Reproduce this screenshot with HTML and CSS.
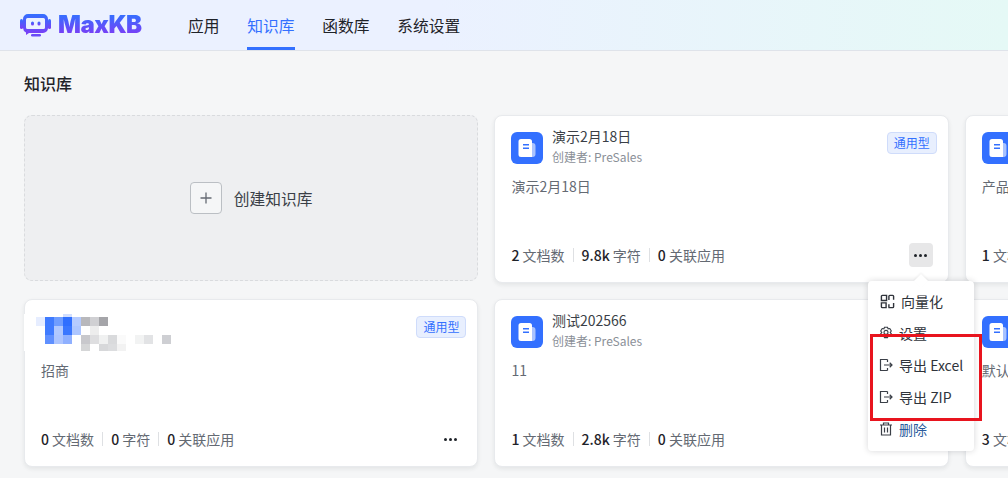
FILE: index.html
```html
<!DOCTYPE html>
<html lang="zh-CN">
<head>
<meta charset="utf-8">
<title>MaxKB 知识库</title>
<link rel="stylesheet" href="styles.css">
</head>
<body>
<header class="topbar">
  <div class="logo">
    <svg class="logo-icon" width="32" height="24" viewBox="0 0 32 24">
      <defs><linearGradient id="lg" x1="0" y1="0" x2="0" y2="1"><stop offset="0" stop-color="#3370ff"/><stop offset="1" stop-color="#7f3bf5"/></linearGradient></defs>
      <rect x="0" y="6" width="3" height="10" rx="1.5" fill="url(#lg)"/>
      <rect x="28" y="6" width="3" height="10" rx="1.5" fill="url(#lg)"/>
      <path fill-rule="evenodd" fill="url(#lg)" d="M8 1h15a5 5 0 0 1 5 5v9a5 5 0 0 1-5 5H9l-3 2v-2.6A5 5 0 0 1 3 15V6a5 5 0 0 1 5-5zm-.5 4A1.5 1.5 0 0 0 6 6.500v8A1.500 1.500 0 0 0 7.500 16h16a1.500 1.500 0 0 0 1.500-1.500v-8A1.500 1.500 0 0 0 23.500 5z"/>
      <rect x="11" y="8.500" width="3" height="4" rx="1.500" fill="url(#lg)"/>
      <rect x="17.500" y="8.500" width="3" height="4" rx="1.500" fill="url(#lg)"/>
      <rect x="11" y="21" width="10" height="2.500" rx="1.200" fill="#6a4cf8"/>
    </svg>
    <span class="logo-text">MaxKB</span>
  </div>
  <nav class="nav">
    <a class="nav-item">应用</a>
    <a class="nav-item active">知识库</a>
    <a class="nav-item">函数库</a>
    <a class="nav-item">系统设置</a>
  </nav>
</header>

<main class="page">
  <h1 class="page-title">知识库</h1>
  <div class="grid">
    <div class="card create">
      <span class="plus"><svg width="14" height="14" viewBox="0 0 14 14"><path d="M7 1.500v11M1.500 7h11" stroke="#646a73" stroke-width="1.300" fill="none"/></svg></span>
      <span class="create-label">创建知识库</span>
    </div>

    <div class="card">
      <div class="card-head">
        <svg class="kb-icon" width="32" height="32" viewBox="0 0 32 32"><use href="#kb"/></svg>
        <div class="titles"><div class="name">演示2月18日</div><div class="owner">创建者: PreSales</div></div>
        <span class="tag">通用型</span>
      </div>
      <p class="desc">演示2月18日</p>
      <div class="card-foot">
        <div class="stats"><span class="stat"><b>2</b> 文档数</span><i class="sep"></i><span class="stat"><b>9.8k</b> 字符</span><i class="sep"></i><span class="stat"><b>0</b> 关联应用</span></div>
        <span class="more hover"><i></i><i></i><i></i></span>
      </div>
    </div>

    <div class="card">
      <div class="card-head">
        <svg class="kb-icon" width="32" height="32" viewBox="0 0 32 32"><use href="#kb"/></svg>
      </div>
      <p class="desc">产品</p>
      <div class="card-foot"><div class="stats"><span class="stat"><b>1</b> 文档数</span></div></div>
    </div>

    <div class="card masked">
      <div class="card-head no-icon">
        <svg class="mosaic" width="147" height="38" viewBox="-3 0 147 38" shape-rendering="crispEdges">
          <rect x="-3" width="12" height="37" fill="#fff"/>
          <rect x="36" width="9" height="3" fill="#d2dfff"/>
          <rect x="9" y="3" width="9" height="9" fill="#e6edff"/><rect x="18" y="3" width="9" height="9" fill="#3f7bff"/><rect x="27" y="3" width="9" height="9" fill="#6f9dff"/><rect x="36" y="3" width="9" height="9" fill="#2f6fff"/><rect x="45" y="3" width="9" height="9" fill="#b5cbff"/><rect x="54" y="3" width="9" height="9" fill="#b8b8bc"/><rect x="63" y="3" width="9" height="9" fill="#d0d0d3"/><rect x="72" y="3" width="9" height="9" fill="#a5a5a9"/>
          <rect x="18" y="12" width="9" height="9" fill="#3f7bff"/><rect x="27" y="12" width="9" height="9" fill="#b0c8ff"/><rect x="36" y="12" width="9" height="9" fill="#3a77ff"/><rect x="45" y="12" width="9" height="9" fill="#adc6ff"/><rect x="63" y="12" width="9" height="9" fill="#ededed"/>
          <rect x="18" y="21" width="9" height="9" fill="#5f90ff"/><rect x="27" y="21" width="9" height="9" fill="#adc5ff"/><rect x="36" y="21" width="9" height="9" fill="#8fb0ff"/><rect x="54" y="21" width="9" height="9" fill="#c8c8cc"/><rect x="63" y="21" width="9" height="9" fill="#dedee0"/><rect x="72" y="21" width="9" height="9" fill="#f0f1f1"/><rect x="81" y="21" width="9" height="9" fill="#d9dadc"/><rect x="90" y="21" width="9" height="9" fill="#fafafa"/><rect x="108" y="21" width="9" height="9" fill="#f2f3f3"/><rect x="117" y="21" width="9" height="9" fill="#e2e3e5"/><rect x="135" y="21" width="9" height="9" fill="#cecfd3"/>
          <rect x="54" y="30" width="9" height="7" fill="#d5d6d7"/><rect x="72" y="30" width="9" height="7" fill="#d7d8da"/><rect x="81" y="30" width="9" height="7" fill="#dcdddf"/><rect x="90" y="30" width="9" height="7" fill="#f2f2f2"/>
        </svg>
        <span class="tag">通用型</span>
      </div>
      <p class="desc">招商</p>
      <div class="card-foot">
        <div class="stats"><span class="stat"><b>0</b> 文档数</span><i class="sep"></i><span class="stat"><b>0</b> 字符</span><i class="sep"></i><span class="stat"><b>0</b> 关联应用</span></div>
        <span class="more"><i></i><i></i><i></i></span>
      </div>
    </div>

    <div class="card">
      <div class="card-head">
        <svg class="kb-icon" width="32" height="32" viewBox="0 0 32 32"><use href="#kb"/></svg>
        <div class="titles"><div class="name">测试202566</div><div class="owner">创建者: PreSales</div></div>
      </div>
      <p class="desc">11</p>
      <div class="card-foot">
        <div class="stats"><span class="stat"><b>1</b> 文档数</span><i class="sep"></i><span class="stat"><b>2.8k</b> 字符</span><i class="sep"></i><span class="stat"><b>0</b> 关联应用</span></div>
      </div>
    </div>

    <div class="card">
      <div class="card-head">
        <svg class="kb-icon" width="32" height="32" viewBox="0 0 32 32"><use href="#kb"/></svg>
      </div>
      <p class="desc">默认</p>
      <div class="card-foot"><div class="stats"><span class="stat"><b>3</b> 文档数</span></div></div>
    </div>
  </div>
</main>

<div class="menu">
  <ul class="menu-list">
    <li class="menu-item first">
      <svg width="15" height="15" viewBox="0 0 16 16" fill="none" stroke="#30343b" stroke-width="1.500"><path d="M1.500 7V2.500a1 1 0 0 1 1-1H7V7z"/><path d="M9.500 6.500V2.500a1 1 0 0 1 1-1h3a1 1 0 0 1 1 1V6"/><path d="M1.500 9.500H6.500v5h-4a1 1 0 0 1-1-1z"/><path d="M14.500 9.500v4a1 1 0 0 1-1 1h-3.500a.5.5 0 0 1-.5-.5v-3"/></svg>
      <span>向量化</span>
    </li>
    <li class="menu-item">
      <svg width="14" height="14" viewBox="0 0 14 14" fill="none" stroke="#3a3f47" stroke-width="1.100"><path d="M5.500 1.200h3l.6 1.600 1.700-.3 1.500 2.500-1.100 1.400 1.100 1.400-1.500 2.500-1.700-.3-.6 1.600h-3l-.6-1.600-1.700.3L1.700 7.800 2.800 6.400 1.700 5l1.500-2.500 1.700.3z"/><circle cx="7" cy="6.400" r="2"/></svg>
      <span>设置</span>
    </li>
    <li class="menu-item">
      <svg width="14" height="14" viewBox="0 0 14 14" fill="none" stroke="#3a3f47" stroke-width="1.200"><path d="M8.500 1.500h-7v11h7M8.500 1.500v2.500M8.500 10v2.500M5 7h8M10.700 4.800 13 7l-2.300 2.200"/></svg>
      <span>导出 Excel</span>
    </li>
    <li class="menu-item">
      <svg width="14" height="14" viewBox="0 0 14 14" fill="none" stroke="#3a3f47" stroke-width="1.200"><path d="M8.500 1.500h-7v11h7M8.500 1.500v2.500M8.500 10v2.500M5 7h8M10.700 4.800 13 7l-2.300 2.200"/></svg>
      <span>导出 ZIP</span>
    </li>
    <li class="menu-item danger">
      <svg width="14" height="14" viewBox="0 0 14 14" fill="none" stroke="#3a3f47" stroke-width="1.200"><path d="M1 3h12M4.500 3V1h5v2M2.500 3v10h9V3M5.500 5.500v5M8.500 5.500v5"/></svg>
      <span>删除</span>
    </li>
  </ul>
</div>
<div class="highlight"></div>

<svg class="defs" width="0" height="0">
  <symbol id="kb" viewBox="0 0 32 32">
    <rect width="32" height="32" rx="6" fill="#3370ff"/>
    <path d="M16 11h5.500a3 3 0 0 1 3 3v8a3 3 0 0 1-3 3H16z" fill="#a9c3ff"/>
    <path d="M10 7h8.500A2.500 2.500 0 0 1 21 9.500V25H10a2.500 2.500 0 0 1-2.500-2.500v-13A2.500 2.500 0 0 1 10 7z" fill="#fff"/>
    <rect x="12" y="12" width="6" height="1.500" fill="#3370ff"/>
    <rect x="12" y="15.500" width="6" height="1.500" fill="#3370ff"/>
  </symbol>
</svg>
</body>
</html>
```
FILE: styles.css
```css
* { box-sizing: border-box; }
html, body { margin: 0; height: 100%; }
body {
  position: relative;
  width: 1008px;
  height: 478px;
  overflow: hidden;
  background: #f5f6f7;
  color: #1f2329;
  font-family: "Noto Sans CJK SC", "Noto Sans", sans-serif;
  font-size: 14px;
}
.topbar {
  display: flex;
  align-items: center;
  height: 51px;
  padding-left: 20px;
  border-bottom: 1px solid #dfe3ea;
  background: linear-gradient(90deg, #ebf1ff 0, #ebf1ff 438px, #e5f9f6 1008px);
}
.logo { display: flex; align-items: center; gap: 6px; width: 168px; }
.logo-icon { flex: none; }
.logo-text {
  font-family: Inter, "Liberation Sans", sans-serif;
  font-size: 24px;
  font-weight: 900;
  line-height: 30px;
  letter-spacing: -.5px;
  background: linear-gradient(180deg, #3370ff 15%, #7f3bf5 85%);
  -webkit-background-clip: text;
  background-clip: text;
  color: transparent;
}
.nav { display: flex; gap: 27.75px; height: 50px; }
.nav-item {
  display: flex;
  align-items: center;
  height: 50px;
  font-size: 15.75px;
  color: #1f2329;
  border-bottom: 3px solid transparent;
  padding-top: 3px;
}
.nav-item.active { color: #3370ff; border-bottom-color: #3370ff; }
.page { padding: 19px 0 0 24px; }
.page-title { margin: 0 0 19px; font-size: 16px; line-height: 26px; font-weight: 500; color: #1f2329; }
.grid {
  display: grid;
  grid-template-columns: repeat(3, 454.4px);
  grid-auto-rows: 168px;
  gap: 16px;
}
.card {
  display: flex;
  flex-direction: column;
  padding: 16px 11px 15px 16px;
  background: #fff;
  border: 1px solid #e8eaed;
  border-radius: 8px;
  box-shadow: 0 2px 4px rgba(31, 35, 41, .08);
}
.card.create {
  flex-direction: row;
  align-items: center;
  justify-content: center;
  align-self: start;
  height: 166px;
  gap: 12px;
  padding: 0;
  background: #eeeff1;
  border: 1px dashed #d9dbde;
  box-shadow: none;
}
.plus {
  display: flex;
  align-items: center;
  justify-content: center;
  width: 32px;
  height: 32px;
  background: #f5f6f7;
  border: 1px solid #bbbfc4;
  border-radius: 4px;
}
.create-label { font-size: 15.75px; color: #3a3f47; }
.card-head { display: flex; align-items: flex-start; height: 38px; position: relative; }
.kb-icon { flex: none; }
.titles { flex: 1; margin-left: 8.6px; margin-top: -7px; }
.name { font-size: 14px; line-height: 22px; color: #3a3f47; }
.owner { font-size: 12px; line-height: 20px; color: #8a8f97; }
.tag {
  margin-left: auto;
  padding: 0 6px;
  height: 22px;
  line-height: 20px;
  font-size: 12px;
  color: #3370ff;
  background: #e8effe;
  border: 1px solid #cfdcfb;
  border-radius: 4px;
}
.desc { margin: 5px 0 0; flex: 1; font-size: 14px; line-height: 22px; color: #646a73; }
.card-foot { display: flex; align-items: center; justify-content: space-between; height: 24px; padding-right: 4px; }
.stats { display: flex; align-items: center; }
.stat { color: #646a73; font-size: 14px; white-space: nowrap; }
.stat b { font-weight: 500; color: #1f2329; }
.sep { width: 1px; height: 14px; margin: 0 8px; background: #dee0e3; }
.more {
  display: flex;
  align-items: center;
  justify-content: center;
  gap: 2px;
  width: 24px;
  height: 24px;
  border-radius: 4px;
}
.more.hover { background: #e7e7e8; }
.more i { width: 3px; height: 3px; border-radius: 50%; background: #1f2329; }
.menu {
  position: absolute;
  left: 868px;
  top: 281px;
  width: 106px;
  height: 170px;
  background: #fff;
  border-radius: 4px;
  box-shadow: 0 0 6px rgba(31, 35, 41, .18);
}
.menu::before {
  content: "";
  position: absolute;
  left: 48px;
  top: -5px;
  width: 10px;
  height: 10px;
  background: #fff;
  transform: rotate(45deg);
  box-shadow: -1px -1px 2px rgba(31, 35, 41, .06);
}
.menu-list { position: relative; margin: 0; padding: 4px 0; list-style: none; }
.menu-item {
  display: flex;
  align-items: center;
  gap: 6px;
  height: 32px;
  padding-left: 11px;
  font-size: 14px;
  color: #2f343b;
  white-space: nowrap;
}
.menu-item.first { gap: 6px; padding-left: 12px; }
.menu-item.danger { color: #2a5a9c; }
.highlight {
  position: absolute;
  left: 870px;
  top: 334px;
  width: 112px;
  height: 87px;
  border: 3px solid #e8141e;
}
.defs { position: absolute; }
.no-icon { display: block; }
.no-icon .tag { position: absolute; right: 0; top: 0; }
.masked { position: relative; }
.masked .mosaic { position: absolute; left: -17px; top: -2px; }
```
